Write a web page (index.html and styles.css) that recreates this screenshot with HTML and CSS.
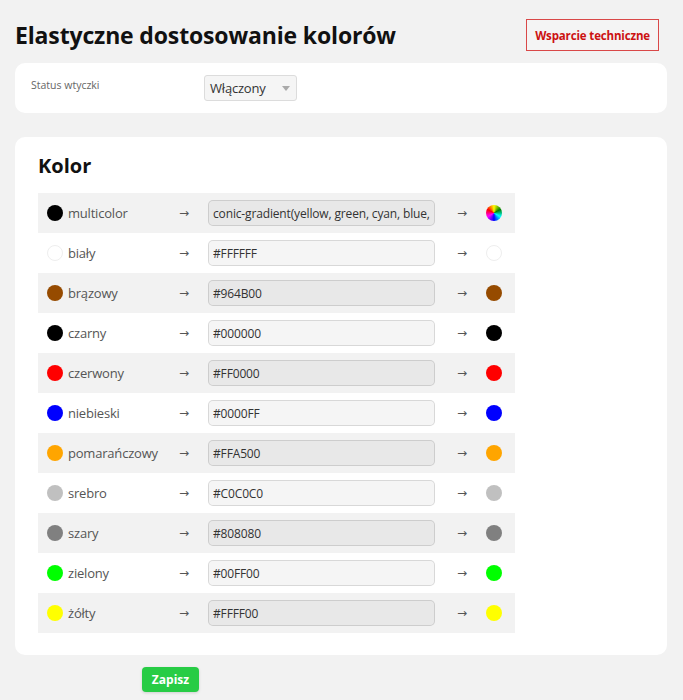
FILE: index.html
```html
<!DOCTYPE html>
<html lang="pl">
<head>
<meta charset="utf-8">
<title>Elastyczne dostosowanie kolorów</title>
<link rel="stylesheet" href="styles.css">
</head>
<body>
<div class="page">
  <header class="header">
    <h1 class="title">Elastyczne dostosowanie kolorów</h1>
    <button class="support">Wsparcie techniczne</button>
  </header>

  <section class="card status-card">
    <div class="status-label">Status wtyczki</div>
    <div class="select">
      <span class="select-text">Włączony</span>
      <span class="select-arrow"></span>
    </div>
  </section>

  <section class="card color-card">
    <h2 class="section-title">Kolor</h2>
    <div class="table">
      <div class="row">
        <span class="dot" style="background:#000000"></span><span class="name">multicolor</span>
        <span class="arrow">→</span>
        <input class="field" value="conic-gradient(yellow, green, cyan, blue, magenta, red, yellow)">
        <span class="arrow arrow2">→</span>
        <span class="dot dot-multi"></span>
      </div>
      <div class="row">
        <span class="dot dot-white" style="background:#FFFFFF"></span><span class="name">biały</span>
        <span class="arrow">→</span>
        <input class="field" value="#FFFFFF">
        <span class="arrow arrow2">→</span>
        <span class="dot dot-white" style="background:#FFFFFF"></span>
      </div>
      <div class="row">
        <span class="dot" style="background:#964B00"></span><span class="name">brązowy</span>
        <span class="arrow">→</span>
        <input class="field" value="#964B00">
        <span class="arrow arrow2">→</span>
        <span class="dot" style="background:#964B00"></span>
      </div>
      <div class="row">
        <span class="dot" style="background:#000000"></span><span class="name">czarny</span>
        <span class="arrow">→</span>
        <input class="field" value="#000000">
        <span class="arrow arrow2">→</span>
        <span class="dot" style="background:#000000"></span>
      </div>
      <div class="row">
        <span class="dot" style="background:#FF0000"></span><span class="name">czerwony</span>
        <span class="arrow">→</span>
        <input class="field" value="#FF0000">
        <span class="arrow arrow2">→</span>
        <span class="dot" style="background:#FF0000"></span>
      </div>
      <div class="row">
        <span class="dot" style="background:#0000FF"></span><span class="name">niebieski</span>
        <span class="arrow">→</span>
        <input class="field" value="#0000FF">
        <span class="arrow arrow2">→</span>
        <span class="dot" style="background:#0000FF"></span>
      </div>
      <div class="row">
        <span class="dot" style="background:#FFA500"></span><span class="name">pomarańczowy</span>
        <span class="arrow">→</span>
        <input class="field" value="#FFA500">
        <span class="arrow arrow2">→</span>
        <span class="dot" style="background:#FFA500"></span>
      </div>
      <div class="row">
        <span class="dot" style="background:#C0C0C0"></span><span class="name">srebro</span>
        <span class="arrow">→</span>
        <input class="field" value="#C0C0C0">
        <span class="arrow arrow2">→</span>
        <span class="dot" style="background:#C0C0C0"></span>
      </div>
      <div class="row">
        <span class="dot" style="background:#808080"></span><span class="name">szary</span>
        <span class="arrow">→</span>
        <input class="field" value="#808080">
        <span class="arrow arrow2">→</span>
        <span class="dot" style="background:#808080"></span>
      </div>
      <div class="row">
        <span class="dot" style="background:#00FF00"></span><span class="name">zielony</span>
        <span class="arrow">→</span>
        <input class="field" value="#00FF00">
        <span class="arrow arrow2">→</span>
        <span class="dot" style="background:#00FF00"></span>
      </div>
      <div class="row">
        <span class="dot" style="background:#FFFF00"></span><span class="name">żółty</span>
        <span class="arrow">→</span>
        <input class="field" value="#FFFF00">
        <span class="arrow arrow2">→</span>
        <span class="dot" style="background:#FFFF00"></span>
      </div>
    </div>
  </section>

  <div class="actions">
    <button class="save">Zapisz</button>
  </div>
</div>
</body>
</html>
```

FILE: styles.css
```css
* {
  box-sizing: border-box;
}

html, body {
  margin: 0;
  padding: 0;
  background: #f2f2f2;
}

body {
  font-family: "Open Sans", "Noto Sans", "Liberation Sans", sans-serif;
  color: #333;
}

.page {
  padding: 19px 16px 8px 15px;
}

.header {
  display: flex;
  justify-content: space-between;
  align-items: center;
  height: 32px;
  padding-right: 8px;
  margin-bottom: 12px;
}

.title {
  margin: 0;
  font-size: 23px;
  font-weight: 700;
  color: #111;
  letter-spacing: -0.15px;
  line-height: 32px;
}

.support {
  height: 32px;
  padding: 0 8px;
  background: #f4f4f4;
  border: 1px solid #d94848;
  color: #cc1111;
  font-family: inherit;
  font-size: 11.5px;
  font-weight: 700;
  letter-spacing: -0.15px;
  cursor: pointer;
}

.card {
  background: #ffffff;
  border-radius: 10px;
}

.status-card {
  display: flex;
  align-items: flex-start;
  height: 50px;
  padding: 12px 16px;
  margin-bottom: 24px;
}

.status-label {
  width: 173px;
  font-size: 10.5px;
  color: #666;
  line-height: 14px;
  padding-top: 3px;
}

.select {
  display: flex;
  align-items: center;
  justify-content: space-between;
  width: 93px;
  height: 26px;
  padding: 0 6px 0 5px;
  background: #f5f5f5;
  border: 1px solid #dcdcdc;
  border-radius: 3px;
}

.select-text {
  font-size: 13px;
  color: #333;
  letter-spacing: -0.2px;
}

.select-arrow {
  width: 0;
  height: 0;
  border-left: 4px solid transparent;
  border-right: 4px solid transparent;
  border-top: 5px solid #aaa;
}

.color-card {
  padding: 15px 0 22px 23px;
}

.section-title {
  margin: 0 0 13px;
  font-size: 20px;
  font-weight: 700;
  line-height: 28px;
  color: #111;
}

.table {
  width: 477px;
}

.row {
  display: grid;
  grid-template-columns: 16px 110px 35px 227px 51px 16px;
  align-items: center;
  height: 40px;
  padding-left: 9px;
  background: #ffffff;
}

.row:nth-child(odd) {
  background: #f2f2f2;
}

.dot {
  display: block;
  width: 16px;
  height: 16px;
  border-radius: 50%;
}

.dot-white {
  border: 1px solid #eeeeee;
}

.dot-multi {
  background: conic-gradient(yellow, green, cyan, blue, magenta, red, yellow);
}

.name {
  padding-left: 5px;
  font-size: 13px;
  color: #555;
  letter-spacing: -0.2px;
  white-space: nowrap;
}

.arrow {
  padding-left: 6px;
  font-size: 12px;
  color: #555;
  font-family: "DejaVu Sans", sans-serif;
}

.arrow2 {
  padding-left: 22px;
}

.field {
  width: 227px;
  height: 26px;
  padding: 0 4px;
  font-family: inherit;
  font-size: 12px;
  color: #333;
  letter-spacing: -0.15px;
  background: rgba(0, 0, 0, 0.04);
  border: 1px solid rgba(0, 0, 0, 0.12);
  border-radius: 5px;
  outline: none;
}

.actions {
  padding: 12px 0 0 127px;
}

.save {
  width: 57px;
  height: 25px;
  padding: 0;
  background: #27cc45;
  color: #ffffff;
  border: none;
  border-radius: 4px;
  font-family: inherit;
  font-size: 12px;
  font-weight: 700;
  box-shadow: 0 1px 3px rgba(0, 0, 0, 0.15);
  cursor: pointer;
}
```
